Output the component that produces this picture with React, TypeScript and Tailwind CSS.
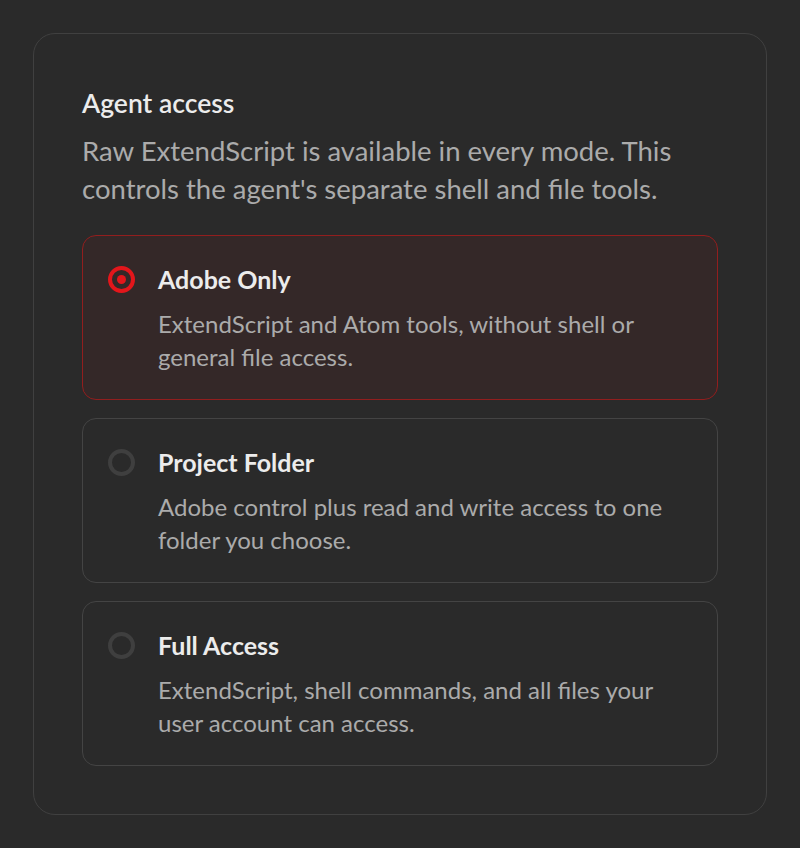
import React, { useState } from 'react';

type Mode = 'adobe' | 'project' | 'full';

const options: { id: Mode; title: string; description: string }[] = [
  {
    id: 'adobe',
    title: 'Adobe Only',
    description: 'ExtendScript and Atom tools, without shell or general file access.',
  },
  {
    id: 'project',
    title: 'Project Folder',
    description: 'Adobe control plus read and write access to one folder you choose.',
  },
  {
    id: 'full',
    title: 'Full Access',
    description: 'ExtendScript, shell commands, and all files your user account can access.',
  },
];

export default function App() {
  const [mode, setMode] = useState<Mode>('adobe');

  return (
    <div className="min-h-[848px] bg-[#2a2a2a] px-[33px] pt-[33px] font-['Lato','Noto_Sans',sans-serif]">
      <div className="rounded-[22px] border border-[#404040] px-[48px] pt-[52px] pb-[48px]">
        <h2 className="text-[26.5px] leading-[34px] font-semibold text-[#ececec]">Agent access</h2>
        <p className="mt-[12px] text-[27.5px] leading-[38px] text-[#ababab]">
          Raw ExtendScript is available in every mode. This controls the agent's separate shell and file tools.
        </p>

        <div className="mt-[27px] flex flex-col gap-[18.5px]">
          {options.map((opt) => {
            const selected = mode === opt.id;
            return (
              <button
                key={opt.id}
                type="button"
                onClick={() => setMode(opt.id)}
                className={`flex items-start gap-[23px] rounded-[14px] border pl-[25px] pr-[24px] pt-[27px] pb-[25.5px] text-left ${
                  selected ? 'border-[#921e1e] bg-[#342828]' : 'border-[#444444] bg-transparent'
                }`}
              >
                {/* Radio */}
                <span
                  className={`mt-[3px] flex h-[27px] w-[27px] shrink-0 items-center justify-center rounded-full border-[4px] ${
                    selected ? 'border-[#e3161b]' : 'border-[#3f3f3f]'
                  }`}
                >
                  {selected && <span className="h-[9px] w-[9px] rounded-full bg-[#e3161b]" />}
                </span>
                <span className="flex flex-col">
                  <span className="text-[25px] leading-[32px] font-bold text-[#ececec]">{opt.title}</span>
                  <span className="mt-[12px] text-[24px] leading-[33px] text-[#ababab]">{opt.description}</span>
                </span>
              </button>
            );
          })}
        </div>
      </div>
    </div>
  );
}
